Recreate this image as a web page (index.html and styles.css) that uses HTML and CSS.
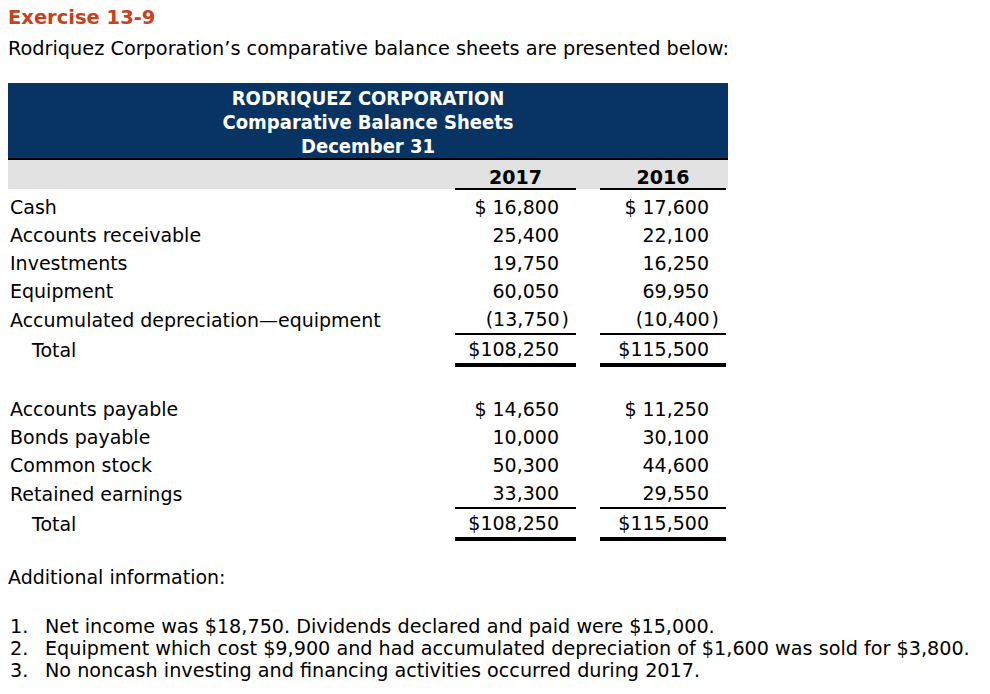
FILE: index.html
```html
<!DOCTYPE html>
<html>
<head>
<meta charset="utf-8">
<link rel="stylesheet" href="styles.css">
</head>
<body>
<h1 class="title">Exercise 13-9</h1>
<p class="intro">Rodriquez Corporation’s comparative balance sheets are presented below:</p>
<table class="sheet">
  <colgroup>
    <col class="c-label"><col class="c-gap1"><col class="c-num1"><col class="c-gap2"><col class="c-num2"><col class="c-end">
  </colgroup>
  <thead>
    <tr class="head">
      <th colspan="6">
        <div class="head-inner">RODRIQUEZ CORPORATION<br>Comparative Balance Sheets<br>December 31</div>
      </th>
    </tr>
    <tr class="years">
      <td></td><td></td><td class="yr">2017</td><td></td><td class="yr">2016</td><td></td>
    </tr>
  </thead>
  <tbody>
    <tr class="first"><td class="lbl">Cash</td><td></td><td class="num">$ 16,800</td><td></td><td class="num">$ 17,600</td><td></td></tr>
    <tr><td class="lbl">Accounts receivable</td><td></td><td class="num">25,400</td><td></td><td class="num">22,100</td><td></td></tr>
    <tr><td class="lbl">Investments</td><td></td><td class="num">19,750</td><td></td><td class="num">16,250</td><td></td></tr>
    <tr><td class="lbl">Equipment</td><td></td><td class="num">60,050</td><td></td><td class="num">69,950</td><td></td></tr>
    <tr><td class="lbl">Accumulated depreciation—equipment</td><td></td><td class="num ul">(13,750<span class="paren">)</span></td><td></td><td class="num ul">(10,400<span class="paren">)</span></td><td></td></tr>
    <tr class="total"><td class="lbl ind">Total</td><td></td><td class="num dbl">$108,250</td><td></td><td class="num dbl">$115,500</td><td></td></tr>
    <tr class="blank"><td colspan="6"></td></tr>
    <tr><td class="lbl">Accounts payable</td><td></td><td class="num">$ 14,650</td><td></td><td class="num">$ 11,250</td><td></td></tr>
    <tr><td class="lbl">Bonds payable</td><td></td><td class="num">10,000</td><td></td><td class="num">30,100</td><td></td></tr>
    <tr><td class="lbl">Common stock</td><td></td><td class="num">50,300</td><td></td><td class="num">44,600</td><td></td></tr>
    <tr><td class="lbl">Retained earnings</td><td></td><td class="num ul">33,300</td><td></td><td class="num ul">29,550</td><td></td></tr>
    <tr class="total"><td class="lbl ind">Total</td><td></td><td class="num dbl">$108,250</td><td></td><td class="num dbl">$115,500</td><td></td></tr>
  </tbody>
</table>
<p class="addl">Additional information:</p>
<ol class="notes">
  <li>Net income was $18,750. Dividends declared and paid were $15,000.</li>
  <li>Equipment which cost $9,900 and had accumulated depreciation of $1,600 was sold for $3,800.</li>
  <li>No noncash investing and financing activities occurred during 2017.</li>
</ol>
</body>
</html>
```

FILE: styles.css
```css
body {
  margin: 0;
  padding: 7px 8px 0 8px;
  font-family: "DejaVu Sans", Verdana, sans-serif;
  font-size: 19px;
  color: #000;
  background: #fff;
}
.title {
  margin: 0;
  font-size: 19.5px;
  line-height: 22px;
  font-weight: bold;
  color: #c9411b;
}
.intro {
  margin: 9px 0 0 0;
  font-size: 19.3px;
  line-height: 22px;
}
.sheet {
  margin-top: 23px;
  border-collapse: collapse;
  width: 720px;
  table-layout: fixed;
}
.c-label { width: 437px; }
.c-gap1 { width: 10px; }
.c-num1 { width: 121px; }
.c-gap2 { width: 24px; }
.c-num2 { width: 126px; }
.c-end { width: 2px; }
.sheet td, .sheet th { padding: 0; }
.head th {
  background: #073463;
  border-bottom: 2px solid #000;
  color: #fff;
}
.head-inner {
  padding-top: 3px;
  text-align: center;
  font-family: "DejaVu Sans Condensed", "DejaVu Sans", sans-serif;
  font-stretch: condensed;
  font-weight: bold;
  font-size: 20px;
  line-height: 24px;
}
.years td {
  background: #e2e2e2;
  height: 28px;
  padding: 0;
}
.years td.yr {
  text-align: center;
  font-weight: bold;
  font-size: 19px;
  line-height: 22px;
  height: 22px;
  padding-top: 6px;
  border-bottom: 2px solid #000;
  vertical-align: top;
}
.sheet tbody td {
  height: 28px;
  line-height: 28px;
  white-space: nowrap;
}
.sheet tbody tr.first td {
  height: 31px;
  vertical-align: bottom;
}
.lbl { padding-left: 2px !important; }
.ind { padding-left: 24px !important; }
.num {
  text-align: right;
  padding-right: 17px !important;
}
.num.ul { border-bottom: 2px solid #000; }
.num.dbl { border-bottom: 4px solid #000; }
.paren {
  display: inline-block;
  margin-left: 2px;
  margin-right: -10px;
}
.addl {
  margin: 25px 0 0 0;
  line-height: 22px;
}
.notes {
  margin: 28px 0 0 0;
  padding: 0 0 0 2px;
  list-style: none;
  counter-reset: note;
  font-size: 19.2px;
  line-height: 22px;
}
.notes li {
  counter-increment: note;
  display: flex;
}
.notes li::before {
  content: counter(note) ".";
  flex: 0 0 35px;
}
```
